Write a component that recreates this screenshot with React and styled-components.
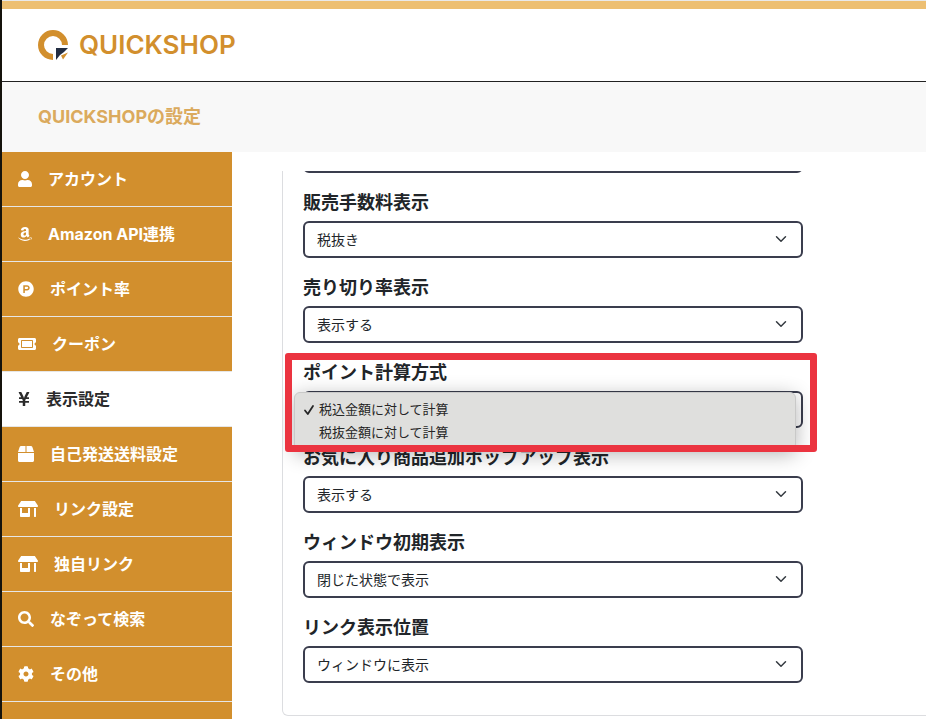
import React from "react";
import styled, { createGlobalStyle, css } from "styled-components";
import {
  FaUser, FaAmazon, FaProductHunt, FaTicketAlt, FaYenSign, FaBox,
  FaStoreAlt, FaSearch, FaCog,
} from "react-icons/fa";

const GlobalStyle = createGlobalStyle`
  *, *::before, *::after { box-sizing: border-box; }
  body {
    margin: 0;
    color: #212529;
    background: #fff;
    font-family: Inter, "Noto Sans CJK JP", sans-serif;
  }
`;

const Page = styled.div`
  display: flex;
  flex-direction: column;
  min-height: 100vh;
  border-left: 2px solid #15130c;
  overflow: hidden;
`;

const Header = styled.header`
  display: flex;
  align-items: center;
  height: 82px;
  padding: 8px 36px 0;
  border-top: 1px solid #e9e9e9;
  border-bottom: 1px solid #222;
  box-shadow: inset 0 8px 0 #edbf72;
`;

const Brand = styled.a`
  display: flex;
  align-items: center;
  gap: 10px;
  color: #d28f2d;
  font-size: 26px;
  line-height: 32px;
  font-weight: 600;
  text-decoration: none;
`;

const TitleBar = styled.div`
  display: flex;
  align-items: center;
  height: 70px;
  padding: 0 36px;
  background: #f8f8f8;
`;

const Title = styled.h1`
  margin: 0;
  color: #dbaa5d;
  font-size: 18px;
  line-height: 24px;
  font-weight: 700;
`;

const Body = styled.div`
  display: flex;
  flex: 1;
`;

const Sidebar = styled.nav`
  flex: 0 0 230px;
  background: #d28f2d;
`;

const MenuLink = styled.a`
  display: flex;
  align-items: center;
  gap: 16px;
  height: 55px;
  padding: 0 16px;
  border-bottom: 1px solid #e6e6e6;
  color: #fff;
  font-size: 16px;
  line-height: 24px;
  font-weight: 700;
  text-decoration: none;

  svg {
    width: ${({ $iconWidth }) => $iconWidth}px;
    height: 16px;
    flex: none;
  }

  ${({ $active }) => $active && css`
    background: #fff;
    color: #2b2b2b;
  `}
`;

const Main = styled.main`
  flex: 1;
  min-width: 0;
  padding: 19px 0 3px 50px;
`;

const Panel = styled.section`
  width: 100%;
  min-width: 660px;
  padding: 0 20px 32px;
  border: solid #dcdde0;
  border-width: 0 1px 1px;
  border-radius: 0 0 6px 6px;
  overflow: hidden;
`;

const Form = styled.form`
  display: grid;
  gap: 16px;
  max-width: 500px;
  margin-top: -35px;
`;

const Field = styled.div`
  position: relative;
  display: flex;
  flex-direction: column;
  gap: 5px;
`;

const Label = styled.label`
  font-size: 18px;
  line-height: 27px;
  font-weight: 700;
`;

const SelectBox = styled.div`
  position: relative;
  color: #343a40;

  > svg {
    position: absolute;
    top: 12px;
    right: 16px;
    pointer-events: none;
  }
`;

const Select = styled.select`
  display: block;
  width: 100%;
  height: 37px;
  padding: 0 36px 0 12px;
  appearance: none;
  border: 2px solid #3a3d4d;
  border-radius: 6px;
  background: #fff;
  color: #212529;
  font: 14px/21px Inter, "Noto Sans CJK JP", sans-serif;
`;

const Popup = styled.ul`
  position: absolute;
  top: 33px;
  left: -9px;
  right: 7px;
  margin: 0;
  padding: 5px 8px;
  border: 1px solid #c9c9c8;
  border-radius: 6px;
  background: #dfdfdd;
  box-shadow: 0 4px 20px rgba(0, 0, 0, 0.3);
  list-style: none;
  z-index: 1;
`;

const Option = styled.li`
  display: flex;
  align-items: center;
  gap: 4px;
  height: 23px;
  color: #262626;
  font-size: 13px;
  line-height: 23px;
`;

const Tick = styled.svg`
  flex: none;
  width: 12px;
  height: 12px;
  visibility: ${({ $shown }) => ($shown ? "visible" : "hidden")};
`;

const Highlight = styled.div`
  position: absolute;
  top: -6px;
  left: -18px;
  right: -14px;
  height: 99px;
  border: 7px solid #eb3440;
  border-radius: 3px;
  pointer-events: none;
  z-index: 2;
`;

const Logo = () => (
  <svg width="31" height="31" viewBox="0 0 31 31" aria-hidden="true">
    <path d="M15 27A12 12 0 1 1 27 15" fill="none" stroke="#d28f2d" strokeWidth="6" />
    <path d="M18 18H30L26 22L22 25L18 30Z" fill="#222d42" />
    <path d="M23 25.500L30 22.500L25 29.500Z" fill="#d28f2d" />
  </svg>
);

const Chevron = () => (
  <svg width="12" height="12" viewBox="0 0 16 16" fill="none" stroke="currentColor"
    strokeWidth="2" strokeLinecap="round" strokeLinejoin="round" aria-hidden="true">
    <path d="m2 5 6 6 6-6" />
  </svg>
);

const menu = [
  { label: "アカウント", icon: FaUser, width: 14 },
  { label: "Amazon API連携", icon: FaAmazon, width: 14 },
  { label: "ポイント率", icon: FaProductHunt, width: 16 },
  { label: "クーポン", icon: FaTicketAlt, width: 18 },
  { label: "表示設定", icon: FaYenSign, width: 12, active: true },
  { label: "自己発送送料設定", icon: FaBox, width: 16 },
  { label: "リンク設定", icon: FaStoreAlt, width: 20 },
  { label: "独自リンク", icon: FaStoreAlt, width: 20 },
  { label: "なぞって検索", icon: FaSearch, width: 16 },
  { label: "その他", icon: FaCog, width: 16 },
];

const fields = [
  { id: "fee", label: "販売手数料表示", options: ["税抜き"] },
  { id: "sellthrough", label: "売り切り率表示", options: ["表示する"] },
  {
    id: "points",
    label: "ポイント計算方式",
    options: ["税込金額に対して計算", "税抜金額に対して計算"],
    open: true,
  },
  { id: "favorite", label: "お気に入り商品追加ポップアップ表示", options: ["表示する"] },
  { id: "window", label: "ウィンドウ初期表示", options: ["閉じた状態で表示"] },
  { id: "links", label: "リンク表示位置", options: ["ウィンドウに表示"] },
];

function SelectField({ id, label, options, open }) {
  return (
    <Field>
      <Label htmlFor={id}>{label}</Label>
      <SelectBox>
        <Select id={id}>
          {options.map((option) => <option key={option}>{option}</option>)}
        </Select>
        <Chevron />
      </SelectBox>
      {open && (
        <>
          <Popup role="listbox" aria-label={label}>
            {options.map((option, i) => (
              <Option key={option} role="option" aria-selected={i === 0}>
                <Tick viewBox="0 0 12 12" $shown={i === 0} aria-hidden="true">
                  <path d="M2 6.500L4.800 10L10 2" fill="none" stroke="currentColor"
                    strokeWidth="1.800" strokeLinecap="round" strokeLinejoin="round" />
                </Tick>
                {option}
              </Option>
            ))}
          </Popup>
          <Highlight />
        </>
      )}
    </Field>
  );
}

export default function App() {
  return (
    <>
      <GlobalStyle />
      <Page>
        <Header>
          <Brand href="#"><Logo />QUICKSHOP</Brand>
        </Header>
        <TitleBar><Title>QUICKSHOPの設定</Title></TitleBar>
        <Body>
          <Sidebar>
            {menu.map(({ label, icon: Icon, width, active }) => (
              <MenuLink
                key={label}
                href="#"
                $iconWidth={width}
                $active={active}
                aria-current={active ? "page" : undefined}
              >
                <Icon aria-hidden="true" />
                {label}
              </MenuLink>
            ))}
          </Sidebar>
          <Main>
            <Panel>
              <Form>
                <SelectBox>
                  <Select aria-label="表示" />
                </SelectBox>
                {fields.map((field) => <SelectField key={field.id} {...field} />)}
              </Form>
            </Panel>
          </Main>
        </Body>
      </Page>
    </>
  );
}
